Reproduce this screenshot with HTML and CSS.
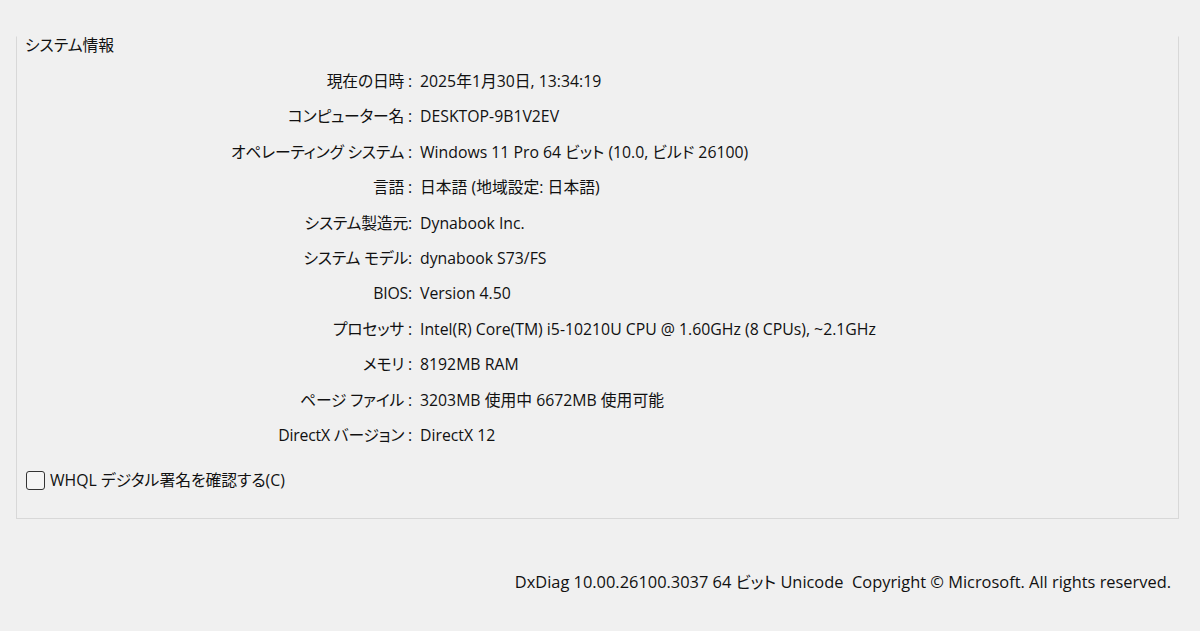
FILE: index.html
```html
<!DOCTYPE html>
<html lang="ja">
<head>
<meta charset="utf-8">
<title>DirectX 診断ツール</title>
<link rel="stylesheet" href="styles.css">
</head>
<body>
<div class="page">
  <section class="group">
    <div class="legend">システム情報</div>
    <div class="info">
      <div class="label">現在の日時 :</div><div class="value">2025年1月30日, 13:34:19</div>
      <div class="label">コンピューター名 :</div><div class="value">DESKTOP-9B1V2EV</div>
      <div class="label">オペレーティング システム :</div><div class="value">Windows 11 Pro 64 ビット (10.0, ビルド 26100)</div>
      <div class="label">言語 :</div><div class="value">日本語 (地域設定: 日本語)</div>
      <div class="label">システム製造元:</div><div class="value">Dynabook Inc.</div>
      <div class="label">システム モデル:</div><div class="value">dynabook S73/FS</div>
      <div class="label">BIOS:</div><div class="value">Version 4.50</div>
      <div class="label">プロセッサ :</div><div class="value">Intel(R) Core(TM) i5-10210U CPU @ 1.60GHz (8 CPUs), ~2.1GHz</div>
      <div class="label">メモリ :</div><div class="value">8192MB RAM</div>
      <div class="label">ページ ファイル :</div><div class="value">3203MB 使用中 6672MB 使用可能</div>
      <div class="label">DirectX バージョン :</div><div class="value">DirectX 12</div>
    </div>
    <label class="check"><span class="box"></span><span>WHQL デジタル署名を確認する(C)</span></label>
  </section>
  <footer class="footer">DxDiag 10.00.26100.3037 64 ビット Unicode&nbsp; Copyright © Microsoft. All rights reserved.</footer>
</div>
</body>
</html>
```
FILE: styles.css
```css
html, body {
  margin: 0;
  padding: 0;
  background: #f0f0f0;
}
body {
  width: 1200px;
  height: 631px;
  overflow: hidden;
  font-family: "Open Sans", "Noto Sans CJK JP", sans-serif;
  font-size: 15.8px;
  font-feature-settings: "palt";
  color: #111;
}
.page {
  padding: 36px 21px 0 16px;
}
.group {
  border: 1px solid #d8d8d8;
  border-top-color: transparent;
  height: 483px;
  box-sizing: border-box;
}
.legend {
  margin: -2px 0 0 8px;
  line-height: 20px;
  height: 20px;
}
.info {
  display: grid;
  grid-template-columns: 395px 1fr;
  column-gap: 8px;
  margin-top: 9px;
}
.label, .value {
  line-height: 35.4px;
  white-space: nowrap;
}
.label {
  text-align: right;
  letter-spacing: -0.2px;
}
.check {
  display: flex;
  align-items: center;
  gap: 5px;
  margin: 14px 0 0 9px;
  line-height: 26px;
}
.box {
  width: 17px;
  height: 17px;
  border: 1px solid #333;
  border-radius: 3px;
  background: #f4f4f4;
}
.footer {
  text-align: right;
  margin-top: 48px;
  padding-right: 8px;
  line-height: 30px;
  font-size: 16.4px;
}
```
